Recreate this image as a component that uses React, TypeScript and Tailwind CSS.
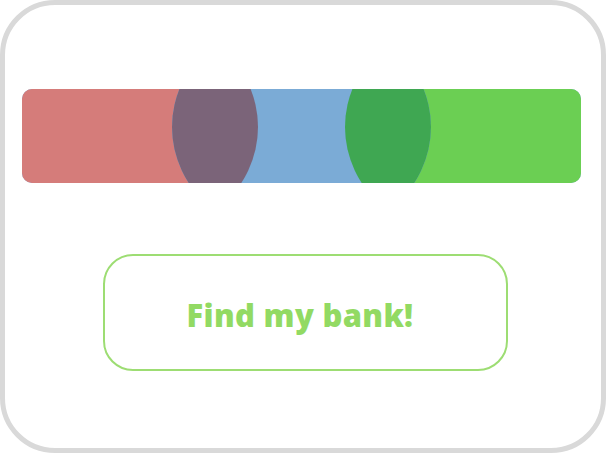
export default function App() {
  return (
    <div className="w-[606px] h-[453px] bg-white">
      <div className="w-full h-full flex flex-col border-[5px] border-[#d9d9d9] rounded-[55px] overflow-hidden">
        {/* Colour bar */}
        <div className="px-[17px] pt-[84px]">
          <svg width="559" height="94" viewBox="0 0 559 94" className="block">
            <defs>
              <clipPath id="bar">
                <rect x="0" y="0" width="559" height="94" rx="10" />
              </clipPath>
              <clipPath id="red">
                <ellipse cx="106.5" cy="38" rx="129.5" ry="114" />
              </clipPath>
              <clipPath id="blue">
                <ellipse cx="279.5" cy="38" rx="129.5" ry="114" />
              </clipPath>
            </defs>
            <g clipPath="url(#bar)">
              <rect x="0" y="0" width="559" height="94" fill="#7babd6" />
              <ellipse cx="106.5" cy="38" rx="129.5" ry="114" fill="#d57c7a" />
              <ellipse cx="452.5" cy="38" rx="129.5" ry="114" fill="#6bcf53" />
              <ellipse cx="279.5" cy="38" rx="129.5" ry="114" fill="#7babd6" />
              <ellipse cx="279.5" cy="38" rx="129.5" ry="114" fill="#7b6479" clipPath="url(#red)" />
              <ellipse cx="452.5" cy="38" rx="129.5" ry="114" fill="#3fa752" clipPath="url(#blue)" />
            </g>
          </svg>
        </div>

        {/* Button */}
        <div className="pt-[71px] pl-[98px]">
          <button className="w-[405px] h-[117px] border-2 border-[#9ddd73] rounded-[30px] flex items-center justify-center pr-[11px] pt-[6px] bg-white">
            <span className="font-['Open_Sans',sans-serif] font-extrabold text-[31px] text-[#92da63] tracking-[0.3px]">
              Find my bank!
            </span>
          </button>
        </div>
      </div>
    </div>
  );
}
